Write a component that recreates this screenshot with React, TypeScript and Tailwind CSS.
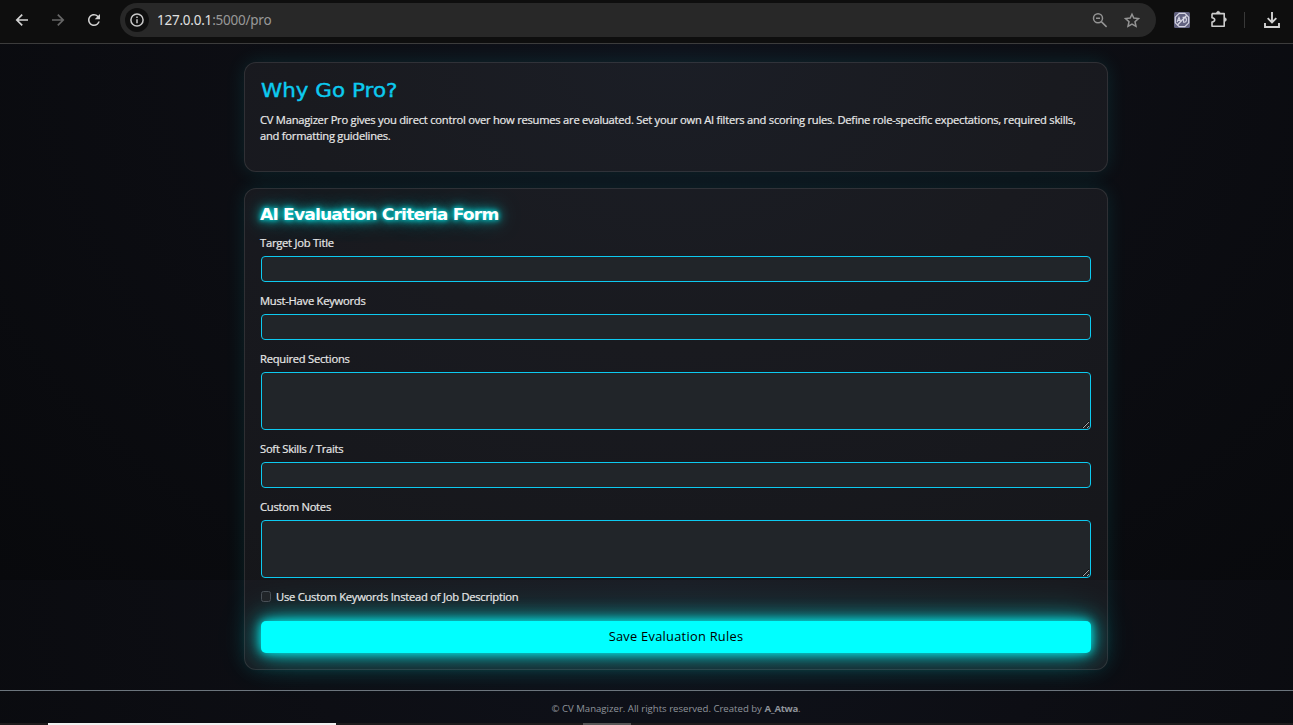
import React from "react";
import { MdRefresh } from "react-icons/md";

function BackIcon() {
  return (
    <svg className="size-4" viewBox="0 0 16 16" fill="none" stroke="currentColor" strokeWidth="1.7">
      <path d="M14 8H3M8.2 2.6 2.8 8l5.4 5.4" />
    </svg>
  );
}

function InfoIcon() {
  return (
    <svg className="size-6" viewBox="0 0 24 24" fill="none" stroke="#c9c9c9">
      <circle cx="12" cy="12" r="6.1" strokeWidth="1.5" />
      <path d="M12 11.2V15.2" strokeWidth="1.5" />
      <path d="M12 8.5V10" strokeWidth="1.5" />
    </svg>
  );
}

function ZoomOutIcon() {
  return (
    <svg className="size-4" viewBox="0 0 16 16" fill="none" stroke="#949494" strokeWidth="1.5">
      <circle cx="6" cy="6.2" r="4.5" />
      <path d="M9.3 9.6 14.6 14.9M4 6.2h4" />
    </svg>
  );
}

function StarIcon() {
  return (
    <svg className="size-4" viewBox="0 0 16 16" fill="none" stroke="#949494" strokeWidth="1.5">
      <path d="M8 2.2 9.8 6.1l4.6.5L11 9.7l1 4.6L8 12l-4 2.3 1-4.6L1.6 6.6l4.6-.5z" />
    </svg>
  );
}

function BlockerIcon() {
  return (
    <svg className="size-4" viewBox="0 0 16 16" fill="none" stroke="#d6d6e2">
      <rect width="16" height="16" rx="1.5" fill="#626280" stroke="none" />
      <path d="M5.2 1.3h5.6l3.9 3.9v5.6l-3.9 3.9H5.2l-3.9-3.9V5.2z" strokeWidth="1.2" />
      <path d="M3.1 10 5 5.2l1.6 4.3M3.8 8.4h2.2" strokeWidth="1.1" />
      <path d="M9.6 6v4.2h.6c3 0 3-4.8 0-4.8H8.6" strokeWidth="1.1" />
      <path d="M3.4 13 12.8 3.2" strokeWidth="1.3" />
    </svg>
  );
}

function PuzzleIcon() {
  return (
    <svg className="h-[18px] w-[18px]" viewBox="0 0 18 18" fill="none" stroke="#cdcdcd" strokeWidth="1.6" strokeLinejoin="round">
      <path d="M2 3.6h12.2v4.1M14.2 11.4v4.8H2v-4.1c3.6-.4 3.6-4.1 0-4.4V3.6M14.2 7.7v3.7" />
      <path d="M6.4 3.2c0-2.6 3.6-2.6 3.6 0zM14.6 7.7c2.5 0 2.5 3.7 0 3.7z" fill="#cdcdcd" strokeWidth=".5" />
    </svg>
  );
}

function DownloadIcon() {
  return (
    <svg className="size-4" viewBox="0 0 16 16" fill="none" stroke="#d2d2d2" strokeWidth="1.9">
      <path d="M8 0v10M3.7 6.2 8 10.5l4.3-4.3M1 11v4h14v-4" />
    </svg>
  );
}

function Toolbar() {
  return (
    <header className="flex h-11 shrink-0 items-center border-b border-[#3c3c3c] bg-[#0e0e0e] pb-[3px]">
      <span className="ml-[14px] text-[#d2d2d2]"><BackIcon /></span>
      <span className="ml-5 -scale-x-100 text-[#666]"><BackIcon /></span>
      <MdRefresh className="ml-[19px] size-[18px] text-[#d2d2d2]" />
      <div className="ml-[17px] flex h-[34px] w-[1036px] items-center rounded-full bg-[#282828] pl-[5px] pr-4">
        <span className="grid size-6 place-items-center rounded-full bg-[#0f0f0f]">
          <InfoIcon />
        </span>
        <span className="ml-2 font-['Noto_Sans','Open_Sans',sans-serif] text-[13.5px] leading-5 tracking-[-0.23px] text-[#989898]">
          <span className="text-[#e0e0e0]">127.0.0.1</span>:5000/pro
        </span>
        <span className="ml-auto flex gap-4">
          <ZoomOutIcon />
          <StarIcon />
        </span>
      </div>
      <span className="ml-[18px]"><BlockerIcon /></span>
      <span className="ml-5 pb-[2px]"><PuzzleIcon /></span>
      <span className="ml-4 h-4 w-px bg-[#383838]" />
      <span className="ml-[19px]"><DownloadIcon /></span>
    </header>
  );
}

const card =
  "rounded-xl border border-white/10 bg-[#ffffff0d] p-4 shadow-[0_0_20px_rgba(0,255,255,0.1)]";

const control =
  "block w-full rounded border border-[#0dcaf0] bg-[#212529] px-2 text-[11px] text-white outline-none";

const bodyText =
  "text-[11.2px] leading-4 tracking-[-0.25px] [-webkit-text-stroke:0.2px_#e8e8e8]";

function Field({ label, multiline = false }: { label: string; multiline?: boolean }) {
  return (
    <label className="mb-[11px] block">
      <span className={`mb-[5px] -ml-px block h-4 ${bodyText}`}>{label}</span>
      {multiline ? (
        <textarea className={`${control} h-[58px] resize-y`} />
      ) : (
        <input className={`${control} h-[26px]`} />
      )}
    </label>
  );
}

export default function App() {
  return (
    <div className="flex h-[725px] w-full flex-col overflow-hidden bg-[#090a0e] font-['Open_Sans',sans-serif] text-[#e8e8e8]">
      <Toolbar />
      <div className="flex w-[1352px] flex-1 flex-col bg-[radial-gradient(ellipse_at_50%_0%,#0f121b_0%,#0d0e14_40%,#08090c_100%)] bg-[length:100%_536px]">
        <main className="mx-auto flex w-[864px] flex-col gap-4 pt-[18px]">
          <section className={`${card} h-[110px]`}>
            <h1 className="h-[22px] w-fit origin-left scale-x-[1.13] font-['DejaVu_Sans',sans-serif] text-[19px] leading-[22px] whitespace-nowrap text-[#0dcaf0] [-webkit-text-stroke:0.4px_#0dcaf0]">
              Why Go Pro?
            </h1>
            <p className={`mt-[11px] -ml-px ${bodyText} tracking-[-0.24px]`}>
              CV Managizer Pro gives you direct control over how resumes are evaluated. Set your own AI filters and scoring rules. Define role-specific expectations, required skills, and formatting guidelines.
            </p>
          </section>
          <section className={`${card} h-[482px]`}>
            <h2 className="mb-3 -ml-px h-[18px] w-fit origin-left scale-x-[1.11] font-['DejaVu_Sans',sans-serif] text-[15.5px] leading-[20px] font-bold tracking-[-0.8px] whitespace-nowrap text-white [text-shadow:0_0_5px_#00ffff,0_0_10px_#00ffff,0_0_20px_#00ffff90]">
              AI Evaluation Criteria Form
            </h2>
            <Field label="Target Job Title" />
            <Field label="Must-Have Keywords" />
            <Field label="Required Sections" multiline />
            <Field label="Soft Skills / Traits" />
            <Field label="Custom Notes" multiline />
            <label className={`flex h-4 items-center ${bodyText}`}>
              <input
                type="checkbox"
                className="mr-[5px] mb-px h-[11px] w-[10px] appearance-none rounded-[2.5px] border border-[#495057] bg-[#212529]"
              />
              Use Custom Keywords Instead of Job Description
            </label>
            <button className="mt-4 block h-8 w-full rounded-[5px] bg-[#00ffff] pb-px text-[12.8px] leading-[29px] tracking-[0.28px] text-black shadow-[0_0_10px_#00ffffc0,0_0_20px_#00ffffc0,0_0_40px_rgba(0,255,255,0.35)]">
              Save Evaluation Rules
            </button>
          </section>
        </main>
        <footer className="mt-5 flex flex-1 flex-col border-t border-[#6c757d] text-[#8f949b]">
          <p className="pt-[10px] text-center text-[9.6px] leading-4">
            © CV Managizer. All rights reserved. Created by{" "}
            <strong className="font-bold tracking-[-0.3px]">A_Atwa</strong>.
          </p>
          <div className="mt-auto flex h-[2px] bg-[#1d1b1c]">
            <span className="ml-12 w-72 bg-[#f0f0f0]" />
            <span className="ml-[247px] w-12 bg-[#555]" />
          </div>
        </footer>
      </div>
    </div>
  );
}
